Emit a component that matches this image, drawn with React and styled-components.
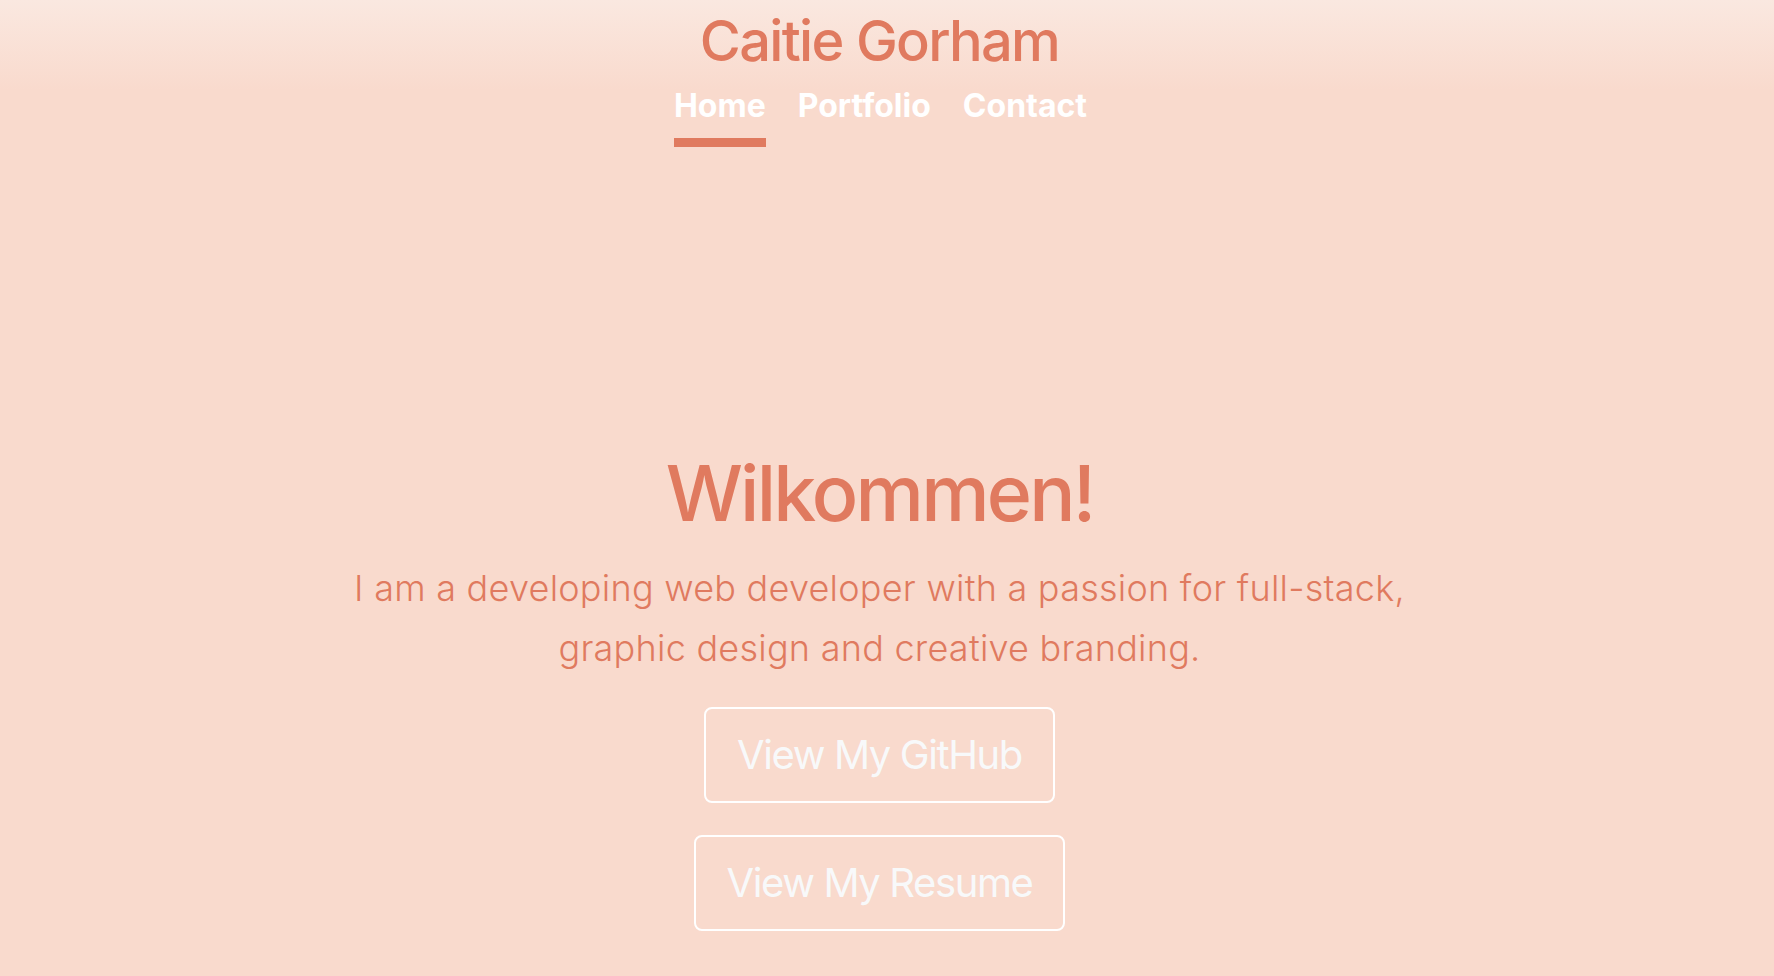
import styled, { createGlobalStyle } from 'styled-components';

const GlobalStyle = createGlobalStyle`
  html, body {
    margin: 0;
    padding: 0;
  }
  body {
    font-family: Inter, "Noto Sans", "Liberation Sans", sans-serif;
    background: #f9dacd;
  }
`;

const Page = styled.div`
  min-height: 100vh;
  box-sizing: border-box;
  padding-right: 15px;
  background: linear-gradient(to bottom, #fae8e0 0px, #f9dacd 90px, #f9dacd 100%);
  display: flex;
  flex-direction: column;
  align-items: center;
`;

const Header = styled.header`
  display: flex;
  flex-direction: column;
  align-items: center;
  padding-top: 8px;
`;

const Title = styled.h1`
  margin: 0;
  font-size: 56px;
  line-height: 1.2;
  font-weight: 500;
  letter-spacing: -1.7px;
  color: #e07a5f;
`;

const Nav = styled.nav`
  display: flex;
  gap: 32px;
  margin-top: 12px;
  margin-left: 2px;
`;

const NavLink = styled.a`
  font-size: 32px;
  line-height: 1.2;
  font-weight: 700;
  color: #fff;
  text-decoration: none;
  padding-bottom: 12px;
  border-bottom: 9px solid ${(p) => (p.$active ? '#e07a5f' : 'transparent')};
`;

const Hero = styled.main`
  display: flex;
  flex-direction: column;
  align-items: center;
  margin-top: 300px;
  text-align: center;
`;

const Heading = styled.h2`
  margin: 0;
  font-size: 77px;
  line-height: 1.2;
  font-weight: 500;
  letter-spacing: -2.8px;
  color: #e07a5f;
`;

const Intro = styled.p`
  margin: 19px 0 0;
  max-width: 1100px;
  font-size: 36px;
  line-height: 60px;
  font-weight: 300;
  letter-spacing: 0.25px;
  color: #e07a5f;
`;

const Buttons = styled.div`
  display: flex;
  flex-direction: column;
  align-items: center;
  gap: 32px;
  margin-top: 29px;
`;

const Button = styled.a`
  display: block;
  font-size: 40px;
  line-height: 1.2;
  font-weight: 400;
  letter-spacing: -1.4px;
  color: #f8f9fa;
  text-decoration: none;
  border: 2px solid #fff;
  border-radius: 8px;
  padding: 22px 31px;
`;

export default function App() {
  return (
    <>
      <GlobalStyle />
      <Page>
        <Header>
          <Title>Caitie Gorham</Title>
          <Nav>
            <NavLink href="#" $active>Home</NavLink>
            <NavLink href="#">Portfolio</NavLink>
            <NavLink href="#">Contact</NavLink>
          </Nav>
        </Header>
        <Hero>
          <Heading>Wilkommen!</Heading>
          <Intro>
            I am a developing web developer with a passion for full-stack, graphic design and creative branding.
          </Intro>
          <Buttons>
            <Button href="#">View My GitHub</Button>
            <Button href="#">View My Resume</Button>
          </Buttons>
        </Hero>
      </Page>
    </>
  );
}
